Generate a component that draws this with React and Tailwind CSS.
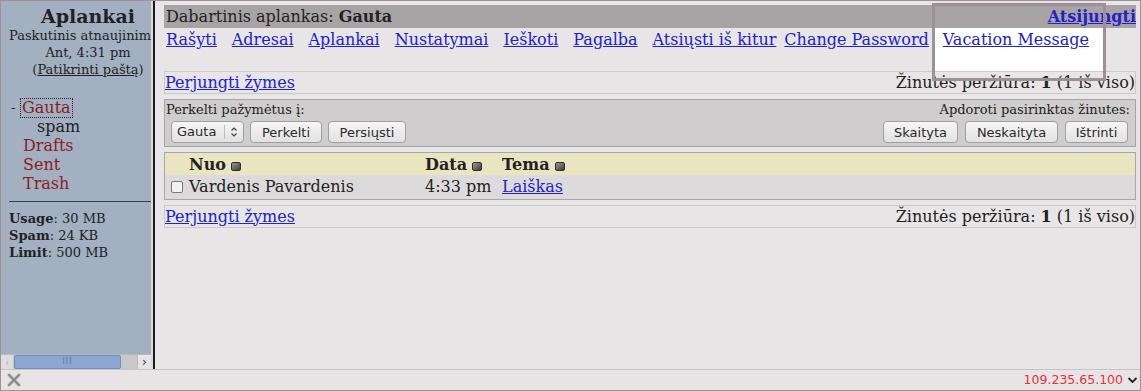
import React from 'react';

const navLinks = [
  { label: 'Rašyti', mr: 'mr-[15px]' },
  { label: 'Adresai', mr: 'mr-[15px]' },
  { label: 'Aplankai', mr: 'mr-[15px]' },
  { label: 'Nustatymai', mr: 'mr-[15px]' },
  { label: 'Ieškoti', mr: 'mr-[15px]' },
  { label: 'Pagalba', mr: 'mr-[15px]' },
  { label: 'Atsiųsti iš kitur', mr: 'mr-[8px]' },
  { label: 'Change Password', mr: 'mr-[6px]' },
];

function SortIcon() {
  return (
    <span className="inline-block w-[10px] h-[9px] ml-[5px] rounded-[2px] border border-[#2e2e2e] bg-gradient-to-br from-[#9a9a9a] via-[#6a6a6a] to-[#3e3e3e] align-[-1px]" />
  );
}

function Btn({ children, w }) {
  return (
    <button className={`h-[22px] ${w} rounded-[4px] border border-[#9f9f9f] bg-gradient-to-b from-[#f6f6f6] to-[#e2e2e2] text-[13px] text-[#2a2a2a] font-['DejaVu_Sans'] leading-none`}>
      {children}
    </button>
  );
}

function ToggleRow() {
  return (
    <div className="h-[23px] border border-[#cbc9ca] flex items-center justify-between text-[16px] leading-[20px]">
      <a className="text-[#2222c8] underline">Perjungti žymes</a>
      <span className="text-[#222]">
        Žinutės peržiūra: <b>1</b> (1 iš viso)
      </span>
    </div>
  );
}

export default function App() {
  return (
    <div className="w-[1141px] h-[391px] border border-[#a38f99] flex flex-col bg-[#e7e5e5] overflow-hidden font-['DejaVu_Serif'] text-[#222]">
      <div className="flex flex-1 min-h-0">
        {/* left folder pane */}
        <div className="w-[150px] bg-[#a2b0c2] flex flex-col">
          <div className="flex-1 min-h-0 overflow-hidden pt-[4px]">
            <div className="w-[174px]">
              <div className="text-center font-bold text-[19px] leading-[22px]">Aplankai</div>
              <div className="text-[13px] leading-[17px]">
                <div className="pl-[8px] whitespace-nowrap">Paskutinis atnaujinimas:</div>
                <div className="text-center">Ant, 4:31 pm</div>
                <div className="text-center">
                  (<a className="underline">Patikrinti paštą</a>)
                </div>
              </div>
            </div>
            <div className="mt-[20px] text-[16px] leading-[19px]">
              <div className="flex items-center pl-[10px]">
                <span className="w-[10px] text-[13px]">-</span>
                <span className="text-[#8c1d1d] outline-1 outline-dotted outline-[#222] px-[1px] leading-[18px]">Gauta</span>
              </div>
              <div className="pl-[36px]">spam</div>
              <div className="pl-[22px] text-[#8c1d1d]">Drafts</div>
              <div className="pl-[22px] text-[#8c1d1d]">Sent</div>
              <div className="pl-[22px] text-[#8c1d1d]">Trash</div>
            </div>
            <div className="ml-[8px] mt-[8px] border-t border-[#3d3d3d]" />
            <div className="pl-[8px] pt-[8px] text-[13px] leading-[17px]">
              <div><b>Usage</b>: 30 MB</div>
              <div><b>Spam</b>: 24 KB</div>
              <div><b>Limit</b>: 500 MB</div>
            </div>
          </div>
          {/* horizontal scrollbar */}
          <div className="h-[15px] flex bg-[#c9c9c9] border-t border-[#b9b9b9]">
            <div className="w-[13px] bg-[#dedede] border-r border-[#c2c2c2] flex items-center justify-center text-[10px] text-[#b0b0b0] font-['DejaVu_Sans']">‹</div>
            <div className="w-[107px] bg-[#8ca7d1] border border-[#6f8dbf] rounded-[2px] flex items-center justify-center text-[8px] tracking-[1px] text-[#5a76a8] font-['DejaVu_Sans']">III</div>
            <div className="flex-1" />
            <div className="w-[14px] bg-[#e4e4e4] border-l border-[#bdbdbd] flex items-center justify-center text-[12px] text-[#333] font-['DejaVu_Sans']">›</div>
          </div>
        </div>
        <div className="w-[2px] bg-[#d9d9d9]" />
        <div className="w-[2px] bg-[#1c1c1c]" />

        {/* main pane */}
        <div className="flex-1 relative pl-[9px] pr-[4px] pt-[4px]">
          <div className="h-[23px] bg-[#a8a3a5] flex items-center justify-between pl-[2px] text-[16px]">
            <span>
              Dabartinis aplankas: <b>Gauta</b>
            </span>
            <a className="font-bold text-[#2222c8] underline">Atsijungti</a>
          </div>
          <div className="h-[43px] flex items-start pl-[2px] text-[16px] leading-[20px]">
            {navLinks.map((l) => (
              <a key={l.label} className={`mt-[2px] text-[#2222c8] underline whitespace-nowrap ${l.mr}`}>
                {l.label}
              </a>
            ))}
            <div className="w-[168px] h-[43px] bg-white pl-[8px] pt-[2px]">
              <a className="text-[#2222c8] underline whitespace-nowrap">Vacation Message</a>
            </div>
          </div>
          <ToggleRow />

          {/* move / process toolbar */}
          <div className="mt-[5px] h-[48px] border border-[#a6a4a5] bg-[#cfcdce] flex justify-between">
            <div className="flex flex-col">
              <div className="pl-[1px] pt-[1px] text-[13px] leading-[17px]">Perkelti pažymėtus į:</div>
              <div className="flex gap-[6px] pl-[6px] mt-[3px]">
                <div className="h-[22px] w-[73px] rounded-[4px] border border-[#9f9f9f] bg-gradient-to-b from-[#f6f6f6] to-[#e2e2e2] flex items-center text-[13px] font-['DejaVu_Sans'] text-[#2a2a2a]">
                  <span className="pl-[5px] w-[52px]">Gauta</span>
                  <span className="h-[14px] border-l border-[#bdbdbd]" />
                  <svg width="16" height="14" viewBox="0 0 16 14" className="ml-[1px]">
                    <path d="M5.5 5.5 L8 3 L10.5 5.5" fill="none" stroke="#444" strokeWidth="1.2" />
                    <path d="M5.5 8.5 L8 11 L10.5 8.5" fill="none" stroke="#444" strokeWidth="1.2" />
                  </svg>
                </div>
                <Btn w="w-[72px]">Perkelti</Btn>
                <Btn w="w-[78px]">Persiųsti</Btn>
              </div>
            </div>
            <div className="flex flex-col items-end pr-[7px]">
              <div className="pt-[1px] text-[13px] leading-[17px] mr-[-2px]">Apdoroti pasirinktas žinutes:</div>
              <div className="flex gap-[7px] mt-[3px]">
                <Btn w="w-[75px]">Skaityta</Btn>
                <Btn w="w-[93px]">Neskaityta</Btn>
                <Btn w="w-[63px]">Ištrinti</Btn>
              </div>
            </div>
          </div>

          {/* message list */}
          <div className="mt-[5px] border border-[#a8a6a7] text-[16px]">
            <div className="h-[22px] bg-[#e9e5c1] grid grid-cols-[24px_236px_77px_1fr] items-center font-bold">
              <span />
              <span>Nuo<SortIcon /></span>
              <span>Data<SortIcon /></span>
              <span>Tema<SortIcon /></span>
            </div>
            <div className="h-[24px] bg-[#dcdadb] grid grid-cols-[24px_236px_77px_1fr] items-center">
              <span className="pl-[6px] flex">
                <span className="w-[12px] h-[12px] border border-[#7a7a7a] bg-[#f1f1f1] rounded-[2px]" />
              </span>
              <span>Vardenis Pavardenis</span>
              <span>4:33 pm</span>
              <a className="text-[#2222c8] underline">Laiškas</a>
            </div>
          </div>

          <div className="mt-[5px]">
            <ToggleRow />
          </div>

          {/* popup outline over the menu */}
          <div className="absolute left-[777px] top-[2px] w-[174px] h-[78px] border-[3px] border-[#9d9198] pointer-events-none" />
        </div>
      </div>

      {/* status bar */}
      <div className="h-[21px] border-t border-[#c9c5c7] bg-[#e8e4e5] flex items-center justify-between pl-[6px] pr-[2px]">
        <svg width="14" height="14" viewBox="0 0 14 14">
          <path d="M2 2 L12 12 M12 2 L2 12" stroke="#cfcfcf" strokeWidth="4" strokeLinecap="round" />
          <path d="M2 2 L12 12 M12 2 L2 12" stroke="#8a8a8a" strokeWidth="2.2" strokeLinecap="round" />
        </svg>
        <div className="flex items-center gap-[4px]">
          <span className="text-[12.5px] text-[#e2323c] font-['DejaVu_Sans']">109.235.65.100</span>
          <svg width="11" height="8" viewBox="0 0 11 8">
            <path d="M1.5 2 L5.5 6 L9.5 2" fill="none" stroke="#222" strokeWidth="1.8" />
          </svg>
        </div>
      </div>
    </div>
  );
}
